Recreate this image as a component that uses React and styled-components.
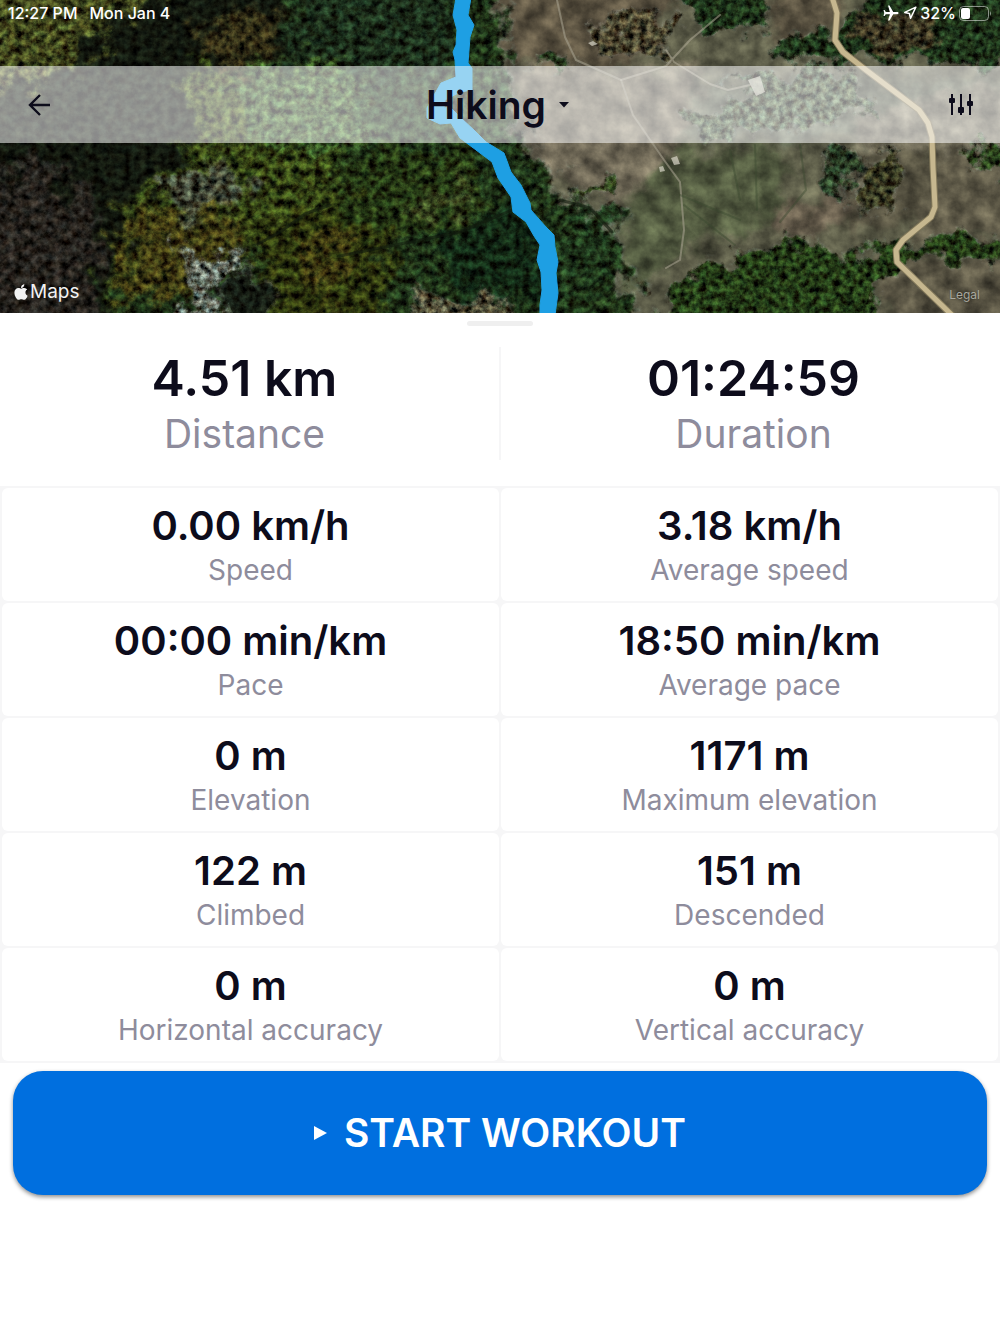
import React from "react";
import styled, { createGlobalStyle } from "styled-components";
import { Navigation } from "lucide-react";
import { MdAirplanemodeActive } from "react-icons/md";
import { FaApple } from "react-icons/fa";

const ink = "#0d0c1b";
const muted = "#8e8c9c";
const hairline = "#f6f6f7";

const GlobalStyle = createGlobalStyle`
  *, *::before, *::after { box-sizing: border-box; }
  body {
    margin: 0;
    background: #fff;
    color: ${ink};
    font-family: Inter, "Liberation Sans", sans-serif;
  }
`;

const Screen = styled.main`
  display: flex;
  flex-direction: column;
  min-height: 100vh;
`;

const MapPanel = styled.section`
  position: relative;
  isolation: isolate;
  display: flex;
  flex-direction: column;
  min-height: 313px;
  overflow: hidden;
`;

const MapArt = styled.svg`
  position: absolute;
  inset: 0;
  z-index: -1;
  width: 100%;
  height: 100%;
`;

const StatusBar = styled.div`
  display: flex;
  justify-content: space-between;
  align-items: center;
  height: 26px;
  margin-bottom: 40px;
  padding: 0 8px;
  color: #fff;
  font-size: 16px;
  line-height: 20px;
  font-weight: 500;
`;

const StatusGroup = styled.div`
  display: flex;
  align-items: center;
  gap: ${(p) => p.$gap}px;
`;

const PlaneIcon = styled(MdAirplanemodeActive)`
  transform: rotate(90deg);
`;

const NavBar = styled.header`
  display: grid;
  grid-template-columns: 1fr auto 1fr;
  align-items: center;
  height: 77px;
  padding: 0 16px;
  background: rgba(255, 255, 255, 0.54);
`;

const IconButton = styled.button`
  display: grid;
  place-items: center;
  justify-self: ${(p) => p.$side};
  width: 46px;
  height: 46px;
  padding: 0;
  border: 0;
  background: none;
  color: ${ink};
  cursor: pointer;
`;

const ActivityPicker = styled.label`
  display: flex;
  align-items: center;
  gap: 12px;
  padding-right: 4px;
`;

const ActivitySelect = styled.select`
  appearance: none;
  field-sizing: content;
  padding: 0;
  border: 0;
  background: none;
  color: ${ink};
  font: 600 39px/52px Inter, "Liberation Sans", sans-serif;
  cursor: pointer;
`;

const MapFooter = styled.div`
  display: flex;
  justify-content: space-between;
  align-items: flex-end;
  margin-top: auto;
  padding: 0 20px 8px 12px;
`;

const MapBrand = styled.span`
  display: flex;
  align-items: center;
  color: #f2f2f2;
  font-size: 19px;
  line-height: 26px;
`;

const LegalLink = styled.a`
  color: #a9a99f;
  font-size: 12px;
  line-height: 20px;
  text-decoration: none;
  text-shadow: 0 0 2px rgba(0, 0, 0, 0.5);
`;

const Handle = styled.div`
  align-self: center;
  width: 66px;
  height: 5px;
  margin: 8px 0 21px;
  border-radius: 3px;
  background: #efefef;
`;

const Summary = styled.dl`
  display: grid;
  grid-template-columns: 1fr 2px 1fr;
  margin: 0 0 26px;
`;

const Divider = styled.div`
  background: ${hairline};
`;

const Grid = styled.dl`
  display: grid;
  grid-template-columns: 1fr 1fr;
  gap: 2px;
  margin: 0;
  padding: 2px;
  background: ${hairline};
`;

const Metric = styled.div`
  display: flex;
  flex-direction: column-reverse;
  justify-content: center;
  align-items: center;
  height: 113px;
  padding: ${(p) => p.$pad || "2px 0 0"};
  border-radius: 6px;
  background: #fff;
`;

const Label = styled.dt`
  color: ${muted};
  font-size: ${(p) => (p.$large ? 39 : 28)}px;
  line-height: ${(p) => (p.$large ? 52 : 40)}px;
  font-weight: 400;
`;

const Value = styled.dd`
  margin: 0;
  font-size: ${(p) => (p.$large ? 50 : 40)}px;
  line-height: ${(p) => (p.$large ? 60 : 48)}px;
  font-weight: 600;
`;

const StartButton = styled.button`
  display: flex;
  justify-content: center;
  align-items: center;
  gap: 16px;
  height: 124px;
  margin: 8px 13px;
  border: 0;
  border-radius: 30px;
  background: #006fdf;
  box-shadow: 0 2px 4px rgba(0, 0, 0, 0.45);
  color: #fff;
  font: 600 39px/52px Inter, "Liberation Sans", sans-serif;
  cursor: pointer;
`;

const summary = [
  { label: "Distance", value: "4.51 km", pad: "0 10px 0 0" },
  { label: "Duration", value: "01:24:59", pad: "0 0 0 6px" },
];

const metrics = [
  ["Speed", "0.00 km/h"],
  ["Average speed", "3.18 km/h"],
  ["Pace", "00:00 min/km"],
  ["Average pace", "18:50 min/km"],
  ["Elevation", "0 m"],
  ["Maximum elevation", "1171 m"],
  ["Climbed", "122 m"],
  ["Descended", "151 m"],
  ["Horizontal accuracy", "0 m"],
  ["Vertical accuracy", "0 m"],
];

function Stat({ label, value, large, pad }) {
  return (
    <Metric $pad={pad}>
      <Label $large={large}>{label}</Label>
      <Value $large={large}>{value}</Value>
    </Metric>
  );
}

const terrainBox = {
  x: -60,
  y: -60,
  width: 1120,
  height: 433,
  filterUnits: "userSpaceOnUse",
  colorInterpolationFilters: "sRGB",
};

function TerrainFilter({ id, soften, warp, seed, frequency, grain }) {
  return (
    <filter id={id} {...terrainBox}>
      <feTurbulence type="fractalNoise" baseFrequency="0.04" numOctaves="5" seed={seed} result="warp" />
      <feGaussianBlur in="SourceGraphic" stdDeviation={soften} result="soft" />
      <feDisplacementMap in="soft" in2="warp" scale={warp} xChannelSelector="R" yChannelSelector="G" result="shape" />
      <feTurbulence type="fractalNoise" baseFrequency={frequency} numOctaves="5" seed={seed + 7} />
      <feColorMatrix values={grain} result="grain" />
      <feBlend in="grain" in2="shape" mode="overlay" />
      <feComposite in2="shape" operator="in" />
    </filter>
  );
}

const forestGrain = "1.3 0.3 0 0 -0.38  1.4 0.1 0 0 -0.33  1.4 0 0.1 0 -0.36  0 0 0 0 1";
const fieldGrain = "0.6 0 0 0 0.19  0.6 0 0 0 0.19  0.6 0 0 0 0.19  0 0 0 0 1";

function SatelliteMap() {
  return (
    <MapArt viewBox="0 0 1000 313" preserveAspectRatio="xMidYMid slice" aria-hidden="true">
      <defs>
        <TerrainFilter id="meadow" soften="5" warp="40" seed={8} frequency="0.05" grain={fieldGrain} />
        <TerrainFilter id="forest" soften="5" warp="70" seed={4} frequency="0.13" grain={forestGrain} />
        <TerrainFilter id="grove" soften="2" warp="44" seed={5} frequency="0.15" grain={forestGrain} />
      </defs>

      <g filter="url(#meadow)">
        <rect x="-60" y="-60" width="1120" height="433" fill="#5d5d49" />
        <path d="M490 -40H700L640 60L560 70L500 55Z" fill="#5f5644" />
        <path d="M510 70H700L690 140L620 200L540 180Z" fill="#716a58" />
        <path d="M700 80H1040V140H690Z" fill="#5b604e" />
        <path d="M860 110L1040 80V150H860Z" fill="#77725f" />
        <path d="M670 150L790 150L790 215L690 250L620 300V220Z" fill="#525a40" />
        <path d="M840 150L930 145V210L850 240Z" fill="#575342" />
        <path d="M940 150H1040V230L910 245Z" fill="#605b49" />
        <path d="M780 -40H860L830 30L770 40Z" fill="#5f5745" />
        <path d="M880 260L1040 240V360H890Z" fill="#5b5645" />
        <path d="M770 215L850 190L840 225L770 240Z" fill="#6b6150" />
      </g>

      <g filter="url(#forest)">
        <path d="M-60 -60H490L505 40L515 130L540 165L580 195L615 240L640 313L640 370H-60Z" fill="#233a1d" />
        <path d="M-60 -60H195L130 30L75 80L-60 100Z" fill="#4a5124" />
        <path d="M100 35L200 -40L280 -40L290 60L190 160L60 370H-60V100L60 75Z" fill="#151b12" />
        <path d="M200 20L280 10L275 60L210 70Z" fill="#39341b" />
        <path d="M300 -40H455V70H290Z" fill="#1f3320" />
        <path d="M-60 170L60 165L110 250L70 370H-60Z" fill="#2b2724" />
        <path d="M190 70L340 65V190L240 250L110 300L120 220L190 150Z" fill="#3a4a19" />
        <path d="M120 220L220 190L250 240L200 290L120 300Z" fill="#484418" />
        <path d="M230 70H340L380 110L330 160L240 140Z" fill="#3b5c2a" />
        <path d="M165 180L230 155L245 200L205 222L170 210Z" fill="#4a5042" />
        <path d="M250 230L335 195L400 225L370 370H260Z" fill="#333c12" />
        <path d="M340 150L470 150L500 195L440 240L350 230Z" fill="#293d18" />
        <path d="M460 225L530 205L560 300H460L430 250Z" fill="#152d19" />
        <path d="M570 200L620 215L600 300L560 290Z" fill="#223c20" />
        <path d="M300 240L360 250L350 290L310 300Z" fill="#443f15" />
        <path d="M410 200L470 185L480 200L430 225Z" fill="#3d4a24" />
      </g>

      <g filter="url(#grove)">
        <path d="M172 248L205 262L232 248L246 254L238 272L222 290L205 345H168L196 290L182 265Z" fill="#6d7672" />
        <path d="M222 300L250 268L278 300L270 350H215Z" fill="#181f17" />
        <path d="M415 292L450 302L515 300L510 340H415Z" fill="#5d5945" />
        <path d="M590 30L640 10L680 20L660 58L600 62Z" fill="#514b37" />
        <path d="M650 -40L775 -40L765 22L720 35L690 20Z" fill="#223a1f" />
        <path d="M775 40L840 25L900 -40H1050V64H880L850 60H770Z" fill="#233b20" />
        <path d="M850 12L940 20L925 55H870Z" fill="#433d2a" />
        <path d="M720 78L850 66L880 110L800 130L700 140L690 110L760 95Z" fill="#4a5a42" />
        <path d="M825 145L850 145L848 205L825 190Z" fill="#2d422b" />
        <path d="M850 160L905 150L905 190L860 225Z" fill="#3f4029" />
        <path d="M660 300L700 265L780 243L860 250L1050 228V262L910 262L880 290L850 360H640Z" fill="#29431c" />
        <path d="M970 145L1050 148V172L980 170Z" fill="#2f4821" />
        <path d="M570 192L610 178L617 188L570 200Z" fill="#33481f" />
        <path d="M530 60L560 50L575 62L550 70Z" fill="#294022" />
      </g>

      <g fill="none" strokeLinecap="round" strokeLinejoin="round">
        <path d="M340 256L400 244L460 232L512 210M330 205L305 214L280 232L258 244M560 200L590 208L612 232" stroke="#10190d" strokeWidth="3" opacity=".6" />
        <path d="M557 0L565 37L576 60L621 80L633 115L664 160L680 182L684 230L680 260L666 268" stroke="#a39f8c" strokeWidth="2" opacity=".6" />
        <path d="M621 80L666 66L690 40L720 15M666 50L674 62L710 84L728 90L750 85" stroke="#b7b29e" strokeWidth="2" opacity=".5" />
        <path d="M680 195L740 220M684 205L735 245M730 150L740 200M755 145L757 210M800 145L806 190L780 222" stroke="#36452d" strokeWidth="2" opacity=".4" />
        <path d="M832 -3L837 13L835 40L843 52L866 70L919 110L928 123L932 137L933 167L935 207L931 217L903 240L896 250L897 262L926 290L955 318" stroke="#82785a" strokeWidth="7" />
        <path d="M832 -3L837 13L835 40L843 52L866 70L919 110L928 123L932 137L933 167L935 207L931 217L903 240L896 250L897 262L926 290L955 318" stroke="#c6b78f" strokeWidth="5" />
      </g>
      <path
        fill="#d8d5c8"
        opacity=".7"
        d="M659 167L663 166L665 171L660 172ZM671 158L677 156L680 164L674 165ZM588 43L593 41L598 44L592 46ZM748 80L760 76L765 92L756 96Z"
      />
      <path
        fill="#1e9fe3"
        stroke="#1e9fe3"
        strokeLinejoin="round"
        fillRule="evenodd"
        d="M456 -2L453 15L457 30L456 45L453 52L455 60L456 77L441 83L433 97L427 108V118L440 124L451 123L460 138L476 150L492 162L498 178L511 197L513 212L526 222L534 236L540 245L537 260L541 272L542 290L540 305V315H555L558 293L556 273L558 262L555 247L554 235L546 227L531 210L530 203L521 185L511 172L504 153L486 142L476 132L460 117L450 107L444 108L445 100L460 92L472 90V68L468 63L470 37L474 25L468 15L471 -2Z"
      />
    </MapArt>
  );
}

function BatteryIcon() {
  return (
    <svg width="33" height="15" viewBox="0 0 33 15" aria-hidden="true">
      <rect x=".5" y=".5" width="29" height="14" rx="4" fill="none" stroke="#fff" strokeOpacity=".5" />
      <rect x="2" y="2" width="9" height="11" rx="2" fill="#fff" />
      <path d="M31 5Q33 7.5 31 10Z" fill="#fff" opacity=".5" />
    </svg>
  );
}

function BackArrow() {
  return (
    <svg width="22" height="22" viewBox="0 0 22 22" fill="none" stroke="currentColor" strokeWidth="2.4" aria-hidden="true">
      <path d="M12 1L2 11L12 21M2 11H22" />
    </svg>
  );
}

function SlidersIcon() {
  return (
    <svg width="24" height="22" viewBox="0 0 24 22" fill="currentColor" aria-hidden="true">
      <path d="M2 0H4V21H2ZM11 0H13V21H11ZM20 0H22V21H20Z" />
      <rect y="4" width="6" height="5" rx="1" />
      <rect x="9" y="13" width="6" height="6" rx="1" />
      <rect x="18" y="7" width="6" height="5" rx="1" />
    </svg>
  );
}

export default function App() {
  return (
    <Screen>
      <GlobalStyle />
      <MapPanel>
        <SatelliteMap />
        <StatusBar>
          <StatusGroup $gap={12}>
            <span>12:27 PM</span>
            <span>Mon Jan 4</span>
          </StatusGroup>
          <StatusGroup $gap={3}>
            <PlaneIcon size={18} />
            <Navigation size={14} strokeWidth={2.6} />
            <span>32%</span>
            <BatteryIcon />
          </StatusGroup>
        </StatusBar>
        <NavBar>
          <IconButton $side="start" aria-label="Back">
            <BackArrow />
          </IconButton>
          <ActivityPicker>
            <ActivitySelect aria-label="Activity" defaultValue="Hiking">
              <option>Hiking</option>
            </ActivitySelect>
            <svg width="12" height="6" viewBox="0 0 12 6" aria-hidden="true">
              <path d="M1 0H11L6 5.5Z" fill={ink} />
            </svg>
          </ActivityPicker>
          <IconButton $side="end" aria-label="Workout settings">
            <SlidersIcon />
          </IconButton>
        </NavBar>
        <MapFooter>
          <MapBrand>
            <FaApple size={18} />
            Maps
          </MapBrand>
          <LegalLink href="#legal">Legal</LegalLink>
        </MapFooter>
      </MapPanel>

      <Handle />
      <Summary>
        <Stat large {...summary[0]} />
        <Divider />
        <Stat large {...summary[1]} />
      </Summary>
      <Grid>
        {metrics.map(([label, value]) => (
          <Stat key={label} label={label} value={value} />
        ))}
      </Grid>
      <StartButton>
        <svg width="14" height="16" viewBox="0 0 14 16" aria-hidden="true">
          <path d="M0 1L13 8L0 15Z" fill="#fff" />
        </svg>
        START WORKOUT
      </StartButton>
    </Screen>
  );
}
